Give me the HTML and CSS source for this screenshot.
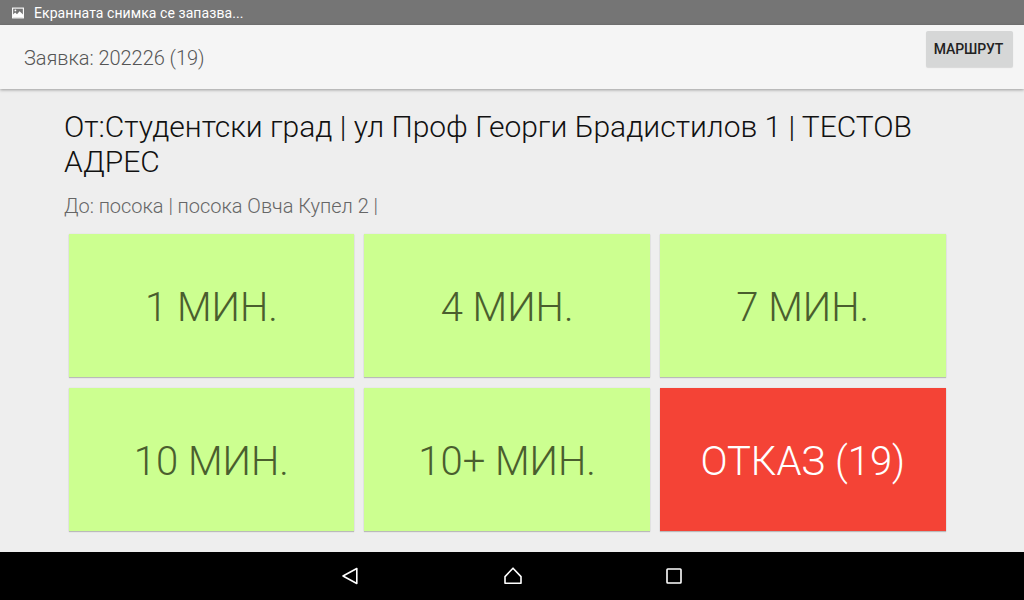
FILE: index.html
```html
<!DOCTYPE html>
<html lang="bg">
<head>
<meta charset="utf-8">
<title>Заявка</title>
<link rel="stylesheet" href="styles.css">
</head>
<body>
<div class="screen">
  <div class="status">
    <svg class="status-icon" width="14" height="14" viewBox="0 0 14 14"><rect x="1.6" y="2.1" width="10.8" height="9.8" fill="none" stroke="#fff" stroke-width="1.1"/><path fill="#fff" d="M2 11.5V8.4l2.2-1.8 1.8 1.7L8.6 5.2 12 8.6v2.9z"/><circle cx="4.4" cy="4.4" r="0.9" fill="#fff"/></svg>
    <span class="status-text">Екранната снимка се запазва...</span>
  </div>
  <header class="toolbar">
    <h1 class="title">Заявка: 202226 (19)</h1>
    <button class="route">МАРШРУТ</button>
  </header>
  <main class="content">
    <p class="from">От:Студентски град | ул Проф Георги Брадистилов 1 | ТЕСТОВ АДРЕС</p>
    <p class="to">До: посока | посока Овча Купел 2 |</p>
    <div class="grid">
      <button class="tile">1 МИН.</button>
      <button class="tile">4 МИН.</button>
      <button class="tile">7 МИН.</button>
      <button class="tile">10 МИН.</button>
      <button class="tile">10+ МИН.</button>
      <button class="tile tile-red">ОТКАЗ (19)</button>
    </div>
  </main>
  <nav class="navbar">
    <svg width="18" height="18" viewBox="0 0 18 18"><path fill="none" stroke="#fff" stroke-width="1.6" stroke-linejoin="round" d="M15.8 1.5v15L2 9z"/></svg>
    <svg width="18" height="18" viewBox="0 0 18 18"><path fill="none" stroke="#fff" stroke-width="1.6" stroke-linejoin="round" d="M9 1.2 17 9.6v6.6H1V9.6z"/></svg>
    <svg width="16" height="16" viewBox="0 0 16 16"><rect x="1" y="1" width="14" height="14" rx="0.8" fill="none" stroke="#fff" stroke-width="1.6"/></svg>
  </nav>
</div>
</body>
</html>
```
FILE: styles.css
```css
* { box-sizing: border-box; }
html, body { margin: 0; padding: 0; }
body { width: 1024px; height: 600px; overflow: hidden; font-family: Roboto, "Liberation Sans", sans-serif; }
.screen { width: 1024px; height: 600px; display: flex; flex-direction: column; background: #eeeeee; }
.status { height: 25px; flex: none; background: #757575; display: flex; align-items: center; padding-left: 11px; gap: 9px; }
.status-icon { flex: none; }
.status-text { color: #fff; font-size: 14px; letter-spacing: 0.07px; }
.toolbar { height: 64px; flex: none; background: #f5f5f5; display: flex; justify-content: space-between; align-items: flex-start; padding: 6px 11px 0 24px; box-shadow: 0 1px 3px rgba(0,0,0,0.35); position: relative; }
.title { margin: 15px 0 0; font-size: 20px; font-weight: 300; line-height: 24px; color: #555; letter-spacing: -0.05px; }
.route { width: 87px; height: 36px; border: 0; border-radius: 2px; background: #d6d7d7; color: #222; font: 500 14px Roboto, sans-serif; letter-spacing: -0.15px; padding: 0 2px 0 0; box-shadow: 0 1px 1px rgba(0,0,0,0.12); }
.content { flex: 1; padding: 20px 64px 0; }
.from { margin: 0; font-size: 30px; font-weight: 300; line-height: 35px; color: #111; width: 880px; letter-spacing: -0.015px; }
.to { margin: 15px 0 0; font-size: 20px; font-weight: 300; line-height: 24px; color: #666; letter-spacing: -0.03px; }
.grid { margin: 16px 0 0 4.6px; width: 878px; display: grid; grid-template-columns: repeat(3, 285.6px); grid-auto-rows: 143px; column-gap: 10.1px; row-gap: 11px; }
.tile { border: 0; padding: 4px 0 0; background: #ccff90; color: #4a5e2e; font: 300 40px Roboto, sans-serif; box-shadow: 0 1px 1px rgba(0,0,0,0.2), 0 0 1px rgba(0,0,0,0.12); }
.tile-red { background: #f44336; color: #fff; }
.navbar { height: 48px; flex: none; background: #000; display: flex; align-items: center; padding-left: 341px; gap: 144.5px; }
```
